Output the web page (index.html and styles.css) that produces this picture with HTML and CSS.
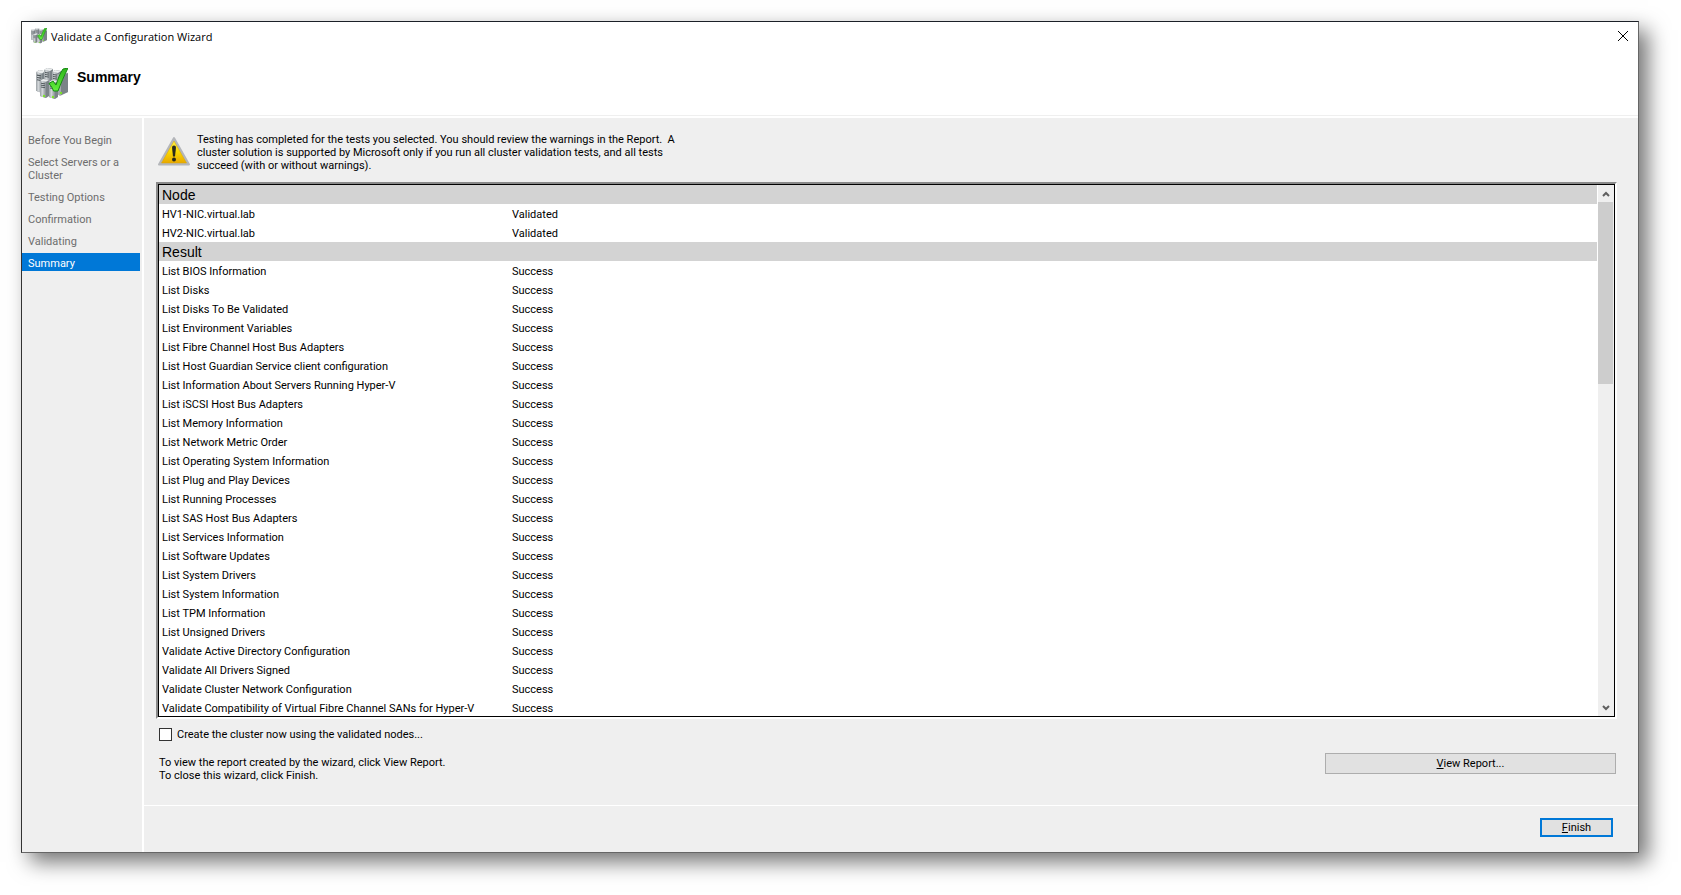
FILE: index.html
```html
<!DOCTYPE html>
<html lang="en">
<head>
    <meta charset="UTF-8">
    <meta name="viewport" content="width=device-width, initial-scale=1.0">
    <title>Validate a Configuration Wizard</title>
    <link rel="stylesheet" href="styles.css">
</head>
<body>
    <!-- Shared artwork -->
    <svg width="0" height="0" class="defs" aria-hidden="true">
        <defs>
            <linearGradient id="metal" x1="0" y1="0" x2="1" y2="0">
                <stop offset="0" stop-color="#9aa0a4"/>
                <stop offset="0.4" stop-color="#d3d7da"/>
                <stop offset="1" stop-color="#868d92"/>
            </linearGradient>
            <linearGradient id="tick" x1="0" y1="0" x2="0" y2="1">
                <stop offset="0" stop-color="#2fb51c"/>
                <stop offset="1" stop-color="#62ee3c"/>
            </linearGradient>
            <linearGradient id="warn" x1="0" y1="0" x2="0" y2="1">
                <stop offset="0" stop-color="#fff04a"/>
                <stop offset="0.5" stop-color="#fbd800"/>
                <stop offset="1" stop-color="#e8a800"/>
            </linearGradient>
            <symbol id="tower" viewBox="0 0 9 20" preserveAspectRatio="none">
                <path d="M0 2 3 0 9 1V18L6 20 0 18Z" fill="#7b8388"/>
                <path d="M0 2 6 3V20L0 18Z" fill="url(#metal)"/>
                <path d="M0 2 3 0 9 1 6 3Z" fill="#eceeef"/>
                <path d="M1 4.500l4 .6M1 6.500l4 .6M1 8.500l4 .6" stroke="#50585c" stroke-width="1"/>
            </symbol>
            <symbol id="servers" viewBox="0 0 32 32">
                <use href="#tower" x="0" y="2" width="9" height="23"/>
                <use href="#tower" x="8" y="0" width="9" height="20"/>
                <use href="#tower" x="16" y="2" width="9" height="20"/>
                <path d="M21 7 26 4 32 5V24L24 28 21 26Z" fill="#a4aaae"/>
                <path d="M25 9 32 5V24L25 27Z" fill="#7b8388"/>
                <use href="#tower" x="4" y="11" width="9" height="19"/>
                <use href="#tower" x="13" y="12" width="9" height="19"/>
                <circle cx="8" cy="28" r="1.200" fill="#7be32b"/>
                <circle cx="17" cy="29" r="1.200" fill="#7be32b"/>
                <circle cx="25" cy="25" r="1.200" fill="#7be32b"/>
                <path d="M13 15.500 17 13 20 17C22 11 24 5 27 1L32 0C28 8 25 15 22 23H17.500C16.500 20 15 18 13 15.500Z" fill="url(#tick)" stroke="#168a12" stroke-width="1"/>
            </symbol>
        </defs>
    </svg>

    <main class="window">
        <div class="titlebar">
            <svg class="app-icon" width="16" height="16"><use href="#servers"/></svg>
            <span class="title">Validate a Configuration Wizard</span>
            <button class="close" type="button" aria-label="Close">
                <svg width="10" height="10" viewBox="0 0 10 10"><path d="M0 0 10 10M10 0 0 10" stroke="#000" fill="none"/></svg>
            </button>
        </div>

        <header class="banner">
            <svg width="32" height="32"><use href="#servers"/></svg>
            <h1>Summary</h1>
        </header>

        <div class="body">
            <nav class="steps">
                <ul>
                    <li>Before You Begin</li>
                    <li>Select Servers or a Cluster</li>
                    <li>Testing Options</li>
                    <li>Confirmation</li>
                    <li>Validating</li>
                    <li class="active" aria-current="step">Summary</li>
                </ul>
            </nav>

            <div class="main">
                <section class="page">
                    <div class="notice">
                        <svg width="32" height="32" viewBox="0 0 32 32" aria-hidden="true">
                            <path d="M16 2 31 28.500H1Z" fill="#b4b6ba" stroke="#b4b6ba" stroke-width="2" stroke-linejoin="round"/>
                            <path d="M16 5 28.500 27H3.500Z" fill="url(#warn)" stroke="#dda600" stroke-width="0.500" stroke-linejoin="round"/>
                            <path d="M14 11.500a2 2 0 0 1 4 0L17 20.500H15Z" fill="#2a2a1c"/>
                            <circle cx="16" cy="23.500" r="2" fill="#2a2a1c"/>
                        </svg>
                        <p>Testing has completed for the tests you selected. You should review the warnings in the Report.&nbsp; A<br>
                        cluster solution is supported by Microsoft only if you run all cluster validation tests, and all tests<br>
                        succeed (with or without warnings).</p>
                    </div>

                    <div class="report">
                        <div class="report-view">
                            <table>
                                <tbody>
                                    <tr class="group"><th colspan="2">Node</th></tr>
                                    <tr><td>HV1-NIC.virtual.lab</td><td>Validated</td></tr>
                                    <tr><td>HV2-NIC.virtual.lab</td><td>Validated</td></tr>
                                    <tr class="group"><th colspan="2">Result</th></tr>
                                    <tr><td>List BIOS Information</td><td>Success</td></tr>
                                    <tr><td>List Disks</td><td>Success</td></tr>
                                    <tr><td>List Disks To Be Validated</td><td>Success</td></tr>
                                    <tr><td>List Environment Variables</td><td>Success</td></tr>
                                    <tr><td>List Fibre Channel Host Bus Adapters</td><td>Success</td></tr>
                                    <tr><td>List Host Guardian Service client configuration</td><td>Success</td></tr>
                                    <tr><td>List Information About Servers Running Hyper-V</td><td>Success</td></tr>
                                    <tr><td>List iSCSI Host Bus Adapters</td><td>Success</td></tr>
                                    <tr><td>List Memory Information</td><td>Success</td></tr>
                                    <tr><td>List Network Metric Order</td><td>Success</td></tr>
                                    <tr><td>List Operating System Information</td><td>Success</td></tr>
                                    <tr><td>List Plug and Play Devices</td><td>Success</td></tr>
                                    <tr><td>List Running Processes</td><td>Success</td></tr>
                                    <tr><td>List SAS Host Bus Adapters</td><td>Success</td></tr>
                                    <tr><td>List Services Information</td><td>Success</td></tr>
                                    <tr><td>List Software Updates</td><td>Success</td></tr>
                                    <tr><td>List System Drivers</td><td>Success</td></tr>
                                    <tr><td>List System Information</td><td>Success</td></tr>
                                    <tr><td>List TPM Information</td><td>Success</td></tr>
                                    <tr><td>List Unsigned Drivers</td><td>Success</td></tr>
                                    <tr><td>Validate Active Directory Configuration</td><td>Success</td></tr>
                                    <tr><td>Validate All Drivers Signed</td><td>Success</td></tr>
                                    <tr><td>Validate Cluster Network Configuration</td><td>Success</td></tr>
                                    <tr><td>Validate Compatibility of Virtual Fibre Channel SANs for Hyper-V</td><td>Success</td></tr>
                                </tbody>
                            </table>
                            <div class="scrollbar">
                                <button type="button" aria-label="Scroll up">
                                    <svg width="8" height="6" viewBox="0 0 8 6"><path d="M1 5 4 2 7 5" stroke="#606060" stroke-width="2" fill="none"/></svg>
                                </button>
                                <div class="track"><div class="thumb"></div></div>
                                <button type="button" aria-label="Scroll down">
                                    <svg width="8" height="6" viewBox="0 0 8 6"><path d="M1 1 4 4 7 1" stroke="#606060" stroke-width="2" fill="none"/></svg>
                                </button>
                            </div>
                        </div>
                    </div>

                    <label class="create" for="create-cluster">
                        <input type="checkbox" id="create-cluster">
                        Create the cluster now using the validated nodes...
                    </label>

                    <div class="hint">
                        <p>To view the report created by the wizard, click View Report.<br>
                        To close this wizard, click Finish.</p>
                        <button class="btn view-report" type="button"><u>V</u>iew Report...</button>
                    </div>
                </section>

                <footer class="actions">
                    <button class="btn finish" type="button"><u>F</u>inish</button>
                </footer>
            </div>
        </div>
    </main>
</body>
</html>
```

FILE: styles.css
```css
* {
    box-sizing: border-box;
}
body {
    margin: 0;
    padding: 21px 42px 42px 21px;
    background: #fff;
    color: #000;
    font-family: Roboto, "Liberation Sans", sans-serif;
    font-size: 11px;
    line-height: 13px;
}
p, h1, ul {
    margin: 0;
    padding: 0;
}
svg {
    display: block;
    flex: none;
}
.defs {
    position: absolute;
}
button {
    font: inherit;
    color: inherit;
    padding: 0;
    border: none;
    background: none;
}

/* Window frame */
.window {
    min-height: calc(100vh - 63px);
    display: flex;
    flex-direction: column;
    border: 1px solid #666;
    border-top-color: #1b2027;
    border-left-color: #333;
    background: #fff;
    box-shadow: 9px 9px 20px rgba(0, 0, 0, 0.55);
}
.titlebar {
    display: flex;
    align-items: center;
    height: 28px;
    padding: 0 10px 0 9px;
}
.title {
    flex: 1;
    padding-left: 4px;
    font-family: "Open Sans", sans-serif;
    font-size: 11px;
}
.banner {
    display: flex;
    height: 66px;
    padding: 18px 14px 0;
    gap: 9px;
    border-bottom: 1px solid #efefef;
}
.banner h1 {
    font-family: "Liberation Sans", Arial, sans-serif;
    font-size: 14px;
    line-height: 18px;
}

.body {
    flex: 1;
    display: flex;
    padding-top: 2px;
    gap: 2px;
}

/* Steps on the left */
.steps {
    width: 120px;
    padding: 12px 2px 0 0;
    background: #efefef;
    color: #6d6d6d;
}
.steps ul {
    display: grid;
    gap: 4px;
    list-style: none;
}
.steps li {
    padding: 4px 12px 1px 6px;
}
.steps .active {
    background: #0078d7;
    color: #fff;
}

/* Page */
.main {
    flex: 1;
    display: flex;
    flex-direction: column;
    background: #efefef;
}
.page {
    flex: 1;
    display: flex;
    flex-direction: column;
    padding: 15px 21px 0 12px;
}
.notice {
    display: flex;
    gap: 7px;
    padding: 0 2px;
    height: 49px;
}
.notice svg {
    margin-top: 3px;
}
.report {
    border: 2px solid #8a8a8a;
    border-right-color: #fff;
    border-bottom-color: #fff;
}
.report-view {
    display: flex;
    height: 533px;
    border: 1px solid #000;
    background: #fff;
    overflow: hidden;
}
table {
    flex: 1;
    border-collapse: collapse;
    table-layout: fixed;
}
td, th {
    height: 19px;
    padding: 1px 3px 0;
    text-align: left;
}
td:first-child {
    width: 350px;
}
.group th {
    background: #d3d3d3;
    font: 14px "Liberation Sans", Arial, sans-serif;
}

.scrollbar {
    display: flex;
    flex-direction: column;
    width: 16px;
    margin-left: 1px;
    background: #efefef;
}
.scrollbar button {
    display: grid;
    place-items: center;
    height: 17px;
}
.track {
    flex: 1;
}
.thumb {
    width: 15px;
    height: 182px;
    background: #cdcdcd;
}

.create {
    display: flex;
    align-items: center;
    align-self: start;
    gap: 5px;
    margin-top: 9px;
    padding-left: 3px;
}
.create input {
    appearance: none;
    width: 13px;
    height: 13px;
    margin: 0;
    border: 1px solid #333;
    background: #fff;
}
.hint {
    display: flex;
    justify-content: space-between;
    padding: 12px 1px 20px 3px;
}
.hint p {
    padding-top: 3px;
}
.btn {
    border: 1px solid #adadad;
    background: #e1e1e1;
}
.view-report {
    width: 291px;
    height: 21px;
}
.actions {
    display: flex;
    justify-content: flex-end;
    padding: 12px 25px 15px;
    border-top: 1px solid #fff;
}
.finish {
    width: 73px;
    height: 19px;
    border: 2px solid #0078d7;
}
```
